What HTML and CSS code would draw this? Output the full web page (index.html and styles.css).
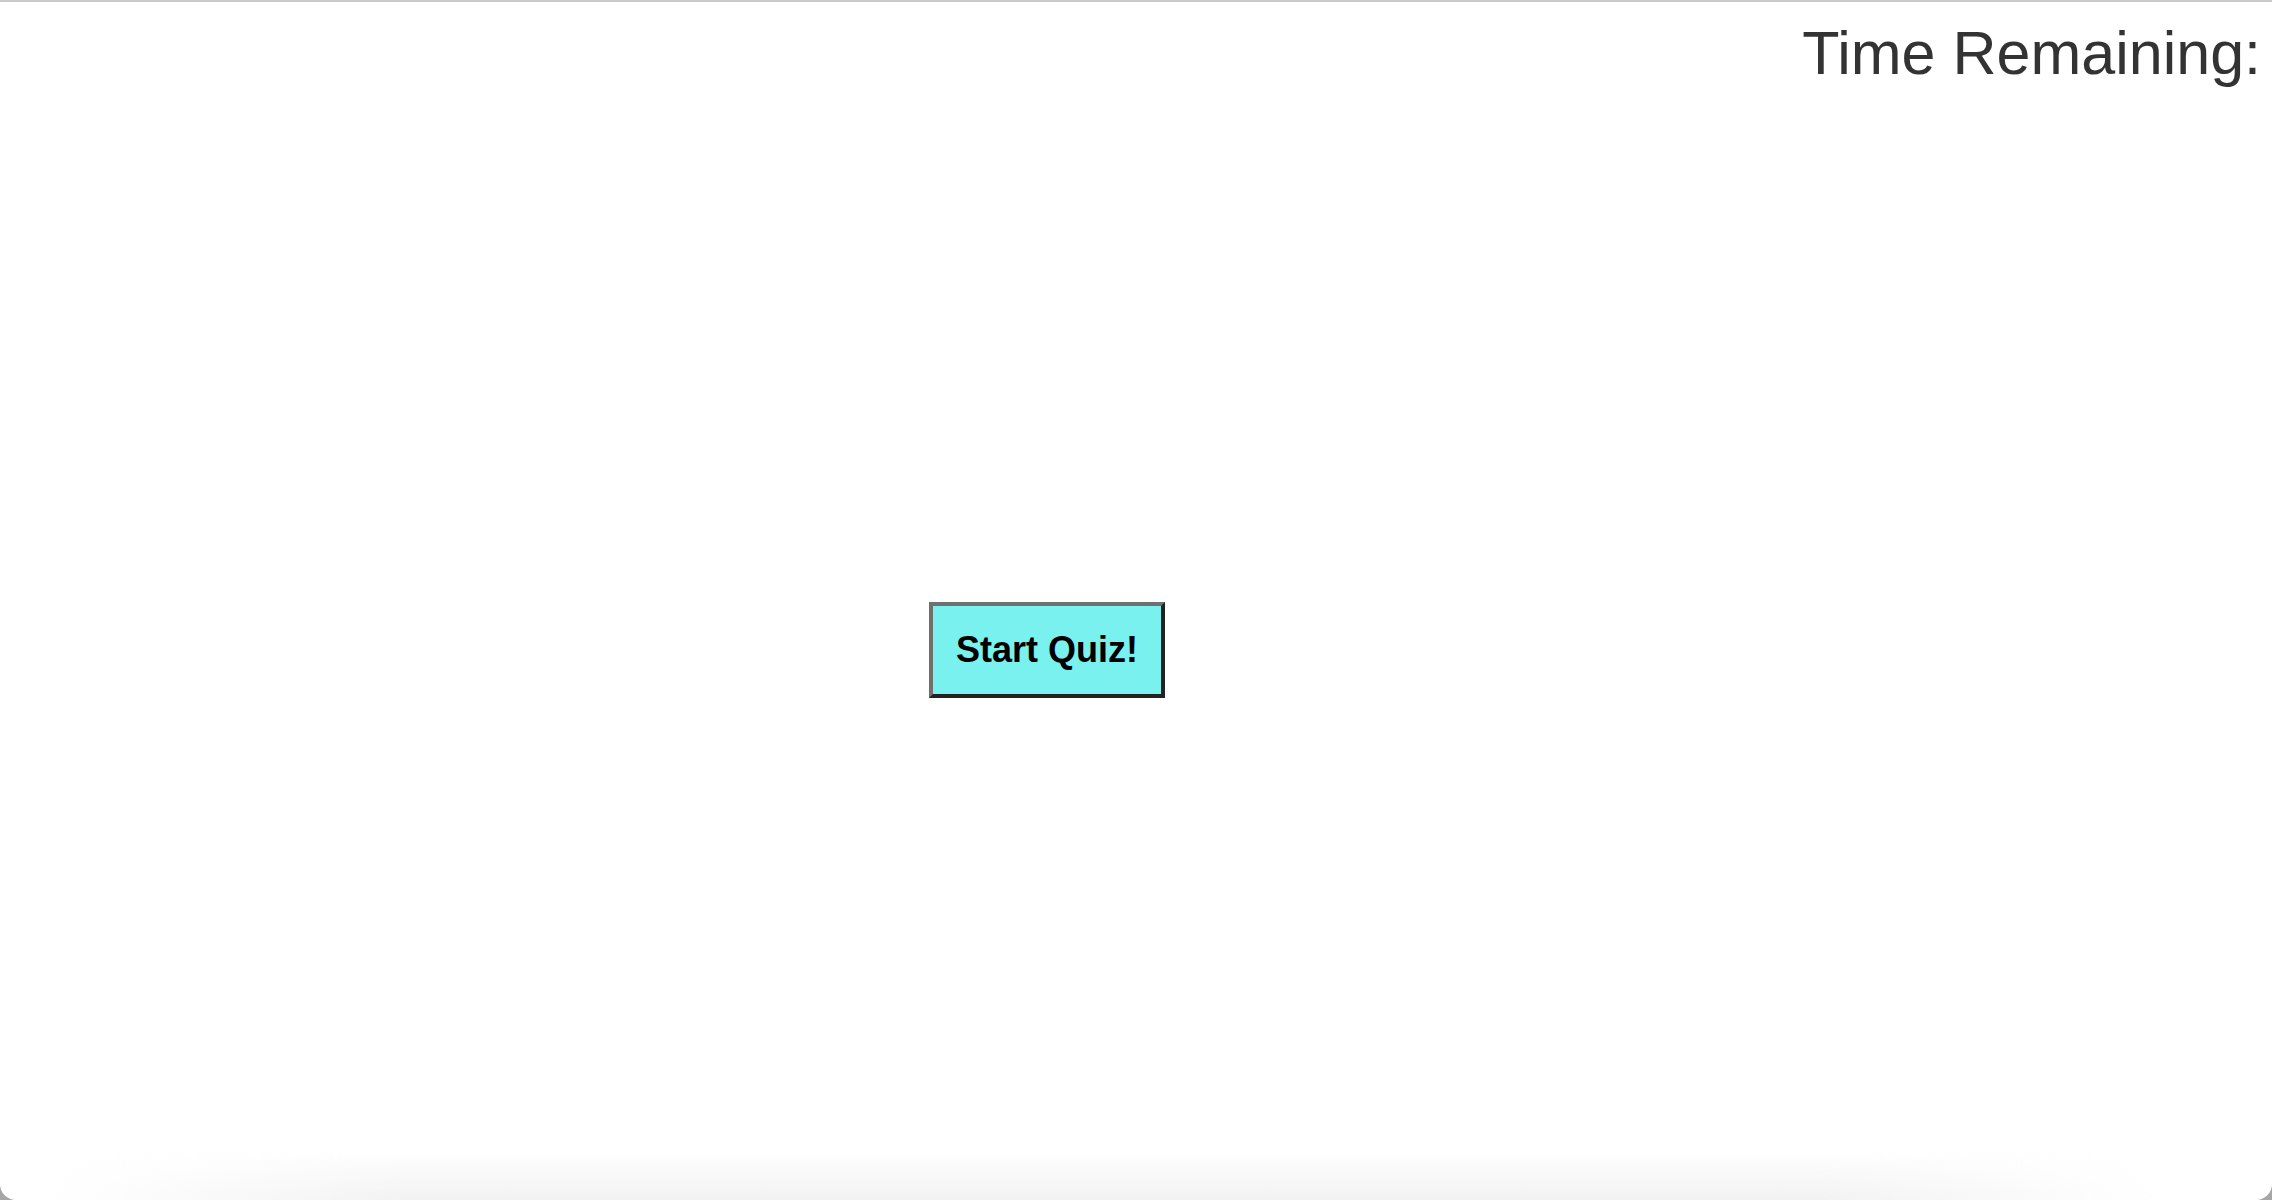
FILE: index.html
```html
<!DOCTYPE html>
<html lang="en">
<head>
<meta charset="utf-8">
<title>Quiz</title>
<link rel="stylesheet" href="styles.css">
</head>
<body>
<div class="window">
  <header class="topbar">
    <div class="timer">Time Remaining:</div>
  </header>
  <main class="stage">
    <button class="start-btn" type="button">Start Quiz!</button>
  </main>
</div>
</body>
</html>
```
FILE: styles.css
```css
html {
  background: #a6a6a6;
}
body {
  margin: 0;
  height: 1200px;
  overflow: hidden;
}
.window {
  position: relative;
  box-sizing: border-box;
  height: 1200px;
  border-top: 2px solid #cacaca;
  border-radius: 0 0 16px 16px;
  background: #ffffff;
  overflow: hidden;
  font-family: "Liberation Sans", Arial, Helvetica, sans-serif;
}
.window::after {
  content: "";
  position: absolute;
  left: 0;
  right: 0;
  bottom: 0;
  height: 50px;
  background: linear-gradient(to top, #f2f2f2, rgba(255,255,255,0));
  -webkit-mask-image: linear-gradient(to right, transparent 2%, #000 18%, #000 80%, transparent 95%);
  mask-image: linear-gradient(to right, transparent 2%, #000 18%, #000 80%, transparent 95%);
  pointer-events: none;
}
.topbar {
  display: flex;
  justify-content: flex-end;
  padding: 16px 11px 0 0;
}
.timer {
  font-size: 61px;
  color: #333333;
  line-height: normal;
}
.stage {
  padding: 514px 0 0 929px;
}
.start-btn {
  font-family: "Liberation Sans", Arial, Helvetica, sans-serif;
  font-weight: bold;
  font-size: 36px;
  line-height: normal;
  color: #000000;
  background: #78f1ef;
  padding: 23px 23px;
  border-width: 4px;
  border-style: solid;
  border-color: #707070 #222222 #222222 #707070;
  margin: 0;
  cursor: pointer;
}
```
